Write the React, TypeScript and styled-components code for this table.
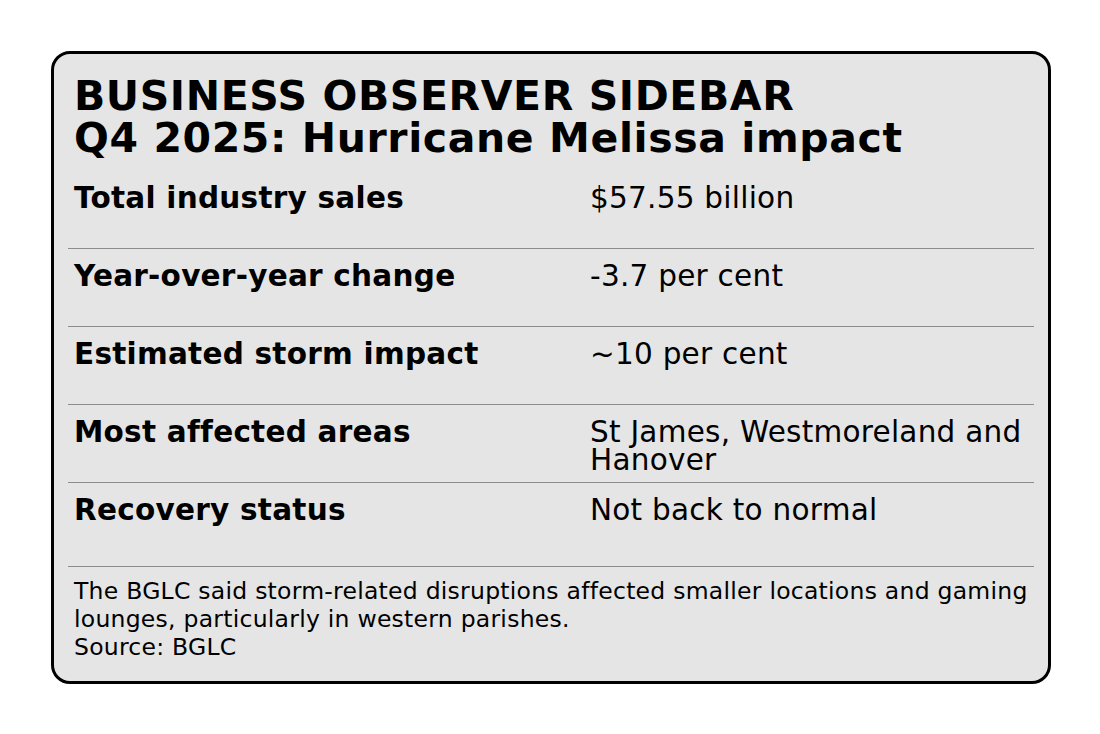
import styled, { createGlobalStyle } from "styled-components";

const GlobalStyle = createGlobalStyle`
  html, body {
    margin: 0;
    padding: 0;
    background: #ffffff;
  }
  body {
    font-family: "DejaVu Sans", "Liberation Sans", sans-serif;
    color: #000;
  }
`;

const rows = [
  { label: "Total industry sales", value: "$57.55 billion" },
  { label: "Year-over-year change", value: "-3.7 per cent" },
  { label: "Estimated storm impact", value: "~10 per cent" },
  { label: "Most affected areas", value: "St James, Westmoreland and Hanover" },
  { label: "Recovery status", value: "Not back to normal", last: true },
];

export default function App() {
  return (
    <Page>
      <GlobalStyle />
      <Card>
        <Title>
          BUSINESS OBSERVER SIDEBAR
          <br />
          Q4 2025: Hurricane Melissa impact
        </Title>
        <Table>
          {rows.map((r) => (
            <Row key={r.label} $last={r.last}>
              <Label>{r.label}</Label>
              <Value>{r.value}</Value>
            </Row>
          ))}
        </Table>
        <Note>
          The BGLC said storm-related disruptions affected smaller locations and gaming
          lounges, particularly in western parishes.
          <br />
          Source: BGLC
        </Note>
      </Card>
    </Page>
  );
}

const Page = styled.div`
  padding: 51px 0 0 51px;
`;

const Card = styled.div`
  box-sizing: border-box;
  width: 1000px;
  height: 633px;
  border: 3px solid #000;
  border-radius: 19px;
  background: #e5e5e5;
  padding: 21px 14px 0;
`;

const Title = styled.h1`
  margin: 0;
  padding: 0 6px;
  font-family: "DejaVu Sans", sans-serif;
  font-weight: 700;
  font-size: 41px;
  line-height: 42px;
  letter-spacing: 0.6px;
`;

const Table = styled.div`
  margin-top: 12px;
`;

const Row = styled.div<{ $last?: boolean }>`
  box-sizing: border-box;
  display: grid;
  grid-template-columns: 516px 1fr;
  height: ${(p) => (p.$last ? "84px" : "78px")};
  padding: 13px 0 0;
  border-bottom: 1px solid #8c8c8c;
  font-size: 29.5px;
  line-height: 28px;
  letter-spacing: 0.25px;
`;

const Label = styled.div`
  padding: 0 6px;
  font-weight: 700;
`;

const Value = styled.div`
  padding: 0 6px;
  font-weight: 400;
`;

const Note = styled.p`
  margin: 0;
  padding: 10px 0 0 6px;
  font-size: 23.5px;
  line-height: 28px;
  letter-spacing: 0.25px;
`;
